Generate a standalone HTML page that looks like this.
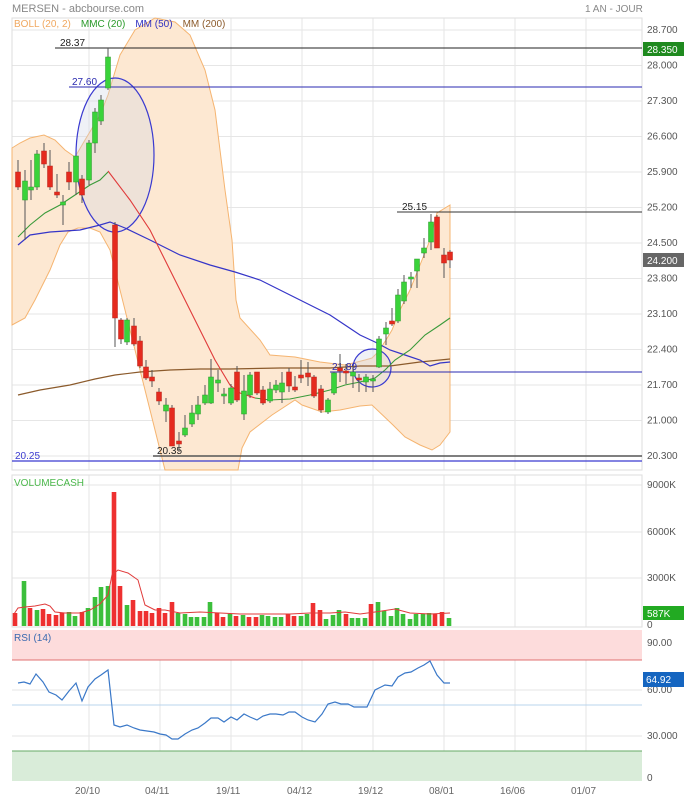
<!DOCTYPE html>
<html><head><meta charset="utf-8"><style>
html,body{margin:0;padding:0;background:#fff;width:684px;height:800px;overflow:hidden}
svg{display:block;font-family:"Liberation Sans",sans-serif}
</style></head><body>
<svg id="s" width="684" height="800" xmlns="http://www.w3.org/2000/svg">
<rect width="684" height="800" fill="#fff"/>
<text x="12" y="12" font-size="11" fill="#888">MERSEN - abcbourse.com</text>
<text x="585" y="12" font-size="10" fill="#888">1 AN - JOUR</text>
<g id="grid" stroke="#e6e6e6" stroke-width="1"></g>
<rect x="12" y="18" width="630" height="452" fill="none" stroke="#ddd"/>
<rect x="12" y="475" width="630" height="152" fill="none" stroke="#ddd"/>
<!-- RSI bands -->
<rect x="12" y="630" width="630" height="30" fill="#fddcdc"/>
<line x1="12" y1="660" x2="642" y2="660" stroke="#e07070"/>
<line x1="12" y1="705" x2="642" y2="705" stroke="#b8d4ee"/>
<rect x="12" y="751" width="630" height="30" fill="#d9ecd9"/>
<line x1="12" y1="751" x2="642" y2="751" stroke="#66aa66"/>
<!-- Bollinger -->
<path d="M12,148 L20,143 L30,138 L44,135 L55,140 L65,150 L75,157 L85,140 L100,115 L108,95 L120,55 L135,30 L155,18 L175,22 L190,35 L205,70 L215,110 L225,190 L232,240 L236,300 L240,318 L260,340 L270,355 L295,357 L320,362 L345,365 L365,360 L372,358 L378,352 L386,340 L392,330 L400,310 L410,290 L420,265 L430,240 L437,213 L450,205 L450,432 L440,445 L432,450 L420,445 L405,437 L393,425 L372,405 L360,406 L340,410 L322,412 L302,405 L295,400 L272,415 L250,432 L242,448 L238,470 L165,470 L160,450 L150,410 L140,370 L130,330 L120,290 L110,250 L100,232 L90,228 L78,228 L68,232 L60,245 L50,270 L35,300 L25,318 L12,325 Z" fill="#fde8d2" stroke="#f5b470" stroke-width="1"/>
<ellipse cx="115" cy="155" rx="39" ry="77" fill="rgba(210,215,230,0.35)" stroke="#3a3ad0" stroke-width="1.2"/>
<circle cx="372" cy="368" r="19" fill="rgba(210,215,230,0.35)" stroke="#3a3ad0" stroke-width="1.2"/>
<polyline fill="none" stroke="#8b5a2b" stroke-width="1.2" points="18,395 40,390 70,385 95,379 115,375 140,372 170,370 200,369 230,369 280,368 330,368 360,366 390,366 420,362 450,359"/>
<polyline fill="none" stroke="#3535c8" stroke-width="1.2" points="18,245 30,235 50,232 80,230 100,225 110,222 125,228 150,240 180,255 210,265 235,272 260,280 290,295 310,305 330,315 342,323 360,335 375,342 390,350 405,355 420,360 430,366 440,363 450,362"/>
<polyline fill="none" stroke="#3a9a3a" stroke-width="1.1" points="18,237 30,225 45,213 60,205 75,195 90,185 100,180 108,172"/>
<polyline fill="none" stroke="#e03a3a" stroke-width="1.1" points="108,171 130,200 150,230 170,270 185,300 200,330 215,360 230,385 240,393 255,398"/>
<polyline fill="none" stroke="#3a9a3a" stroke-width="1.1" points="255,398 270,400 290,399 310,395 330,390 345,385 360,382 375,378 385,370 395,360 410,350 425,335 440,325 450,318"/>
<!-- horizontal levels -->
<line x1="55" y1="48" x2="642" y2="48" stroke="#222"/>
<text x="60" y="46" font-size="10" fill="#222">28.37</text>
<line x1="69" y1="87" x2="642" y2="87" stroke="#2a2ab0"/>
<text x="72" y="85" font-size="10" fill="#2a2ab0">27.60</text>
<line x1="397" y1="212" x2="642" y2="212" stroke="#333"/>
<text x="402" y="210" font-size="10" fill="#222">25.15</text>
<line x1="330" y1="372" x2="642" y2="372" stroke="#2a2ab0"/>
<text x="332" y="370" font-size="10" fill="#2a2ab0">21.89</text>
<line x1="153" y1="456" x2="642" y2="456" stroke="#555" stroke-width="1.5"/>
<text x="157" y="454" font-size="10" fill="#222">20.35</text>
<line x1="12" y1="461" x2="642" y2="461" stroke="#3a3ad0" stroke-width="1.2"/>
<text x="15" y="459" font-size="10" fill="#3a3ad0">20.25</text>
<g id="candles"></g>
<g id="vols"></g>
<polyline fill="none" stroke="#e03a3a" stroke-width="1" points="14,614 18,608 25,607 35,606 45,604 50,606 55,612 65,613 80,613 90,610 100,604 108,595 112,575 118,570 128,573 138,580 145,605 155,610 165,610 180,613 200,612 220,613 240,614 260,614 290,614 310,613 330,613 345,612 360,614 375,612 395,609 410,613 430,614 450,613"/>
<polyline fill="none" stroke="#3a78c8" stroke-width="1.2" points="18,683 24,682 30,684 36,674 43,682 49,692 56,695 62,700 69,691 76,683 82,701 88,687 95,679 101,675 108,670 114,725 120,727 127,725 134,728 140,730 147,731 154,732 160,734 166,735 172,739 178,739 185,734 192,730 198,728 205,723 211,718 218,718 224,722 231,717 237,720 244,714 250,717 257,720 263,716 270,714 276,714 283,715 289,712 295,712 302,717 308,720 315,722 322,714 328,704 335,702 341,704 348,704 354,707 361,707 367,707 375,690 385,685 392,686 398,677 405,673 411,672 418,668 424,665 430,661 437,675 444,683 450,683"/>
<!-- legends -->
<text x="14" y="27" font-size="10"><tspan fill="#f0a860">BOLL (20, 2)</tspan><tspan dx="10" fill="#2a9a2a">MMC (20)</tspan><tspan dx="10" fill="#3030c0">MM (50)</tspan><tspan dx="10" fill="#8b5a2b">MM (200)</tspan></text>
<text x="14" y="486" font-size="10" fill="#4cb84c">VOLUMECASH</text>
<text x="14" y="641" font-size="10" fill="#3a6ab0">RSI (14)</text>
<!-- right labels -->
<g font-size="10" fill="#555" id="rl"></g>
<rect x="643" y="42" width="41" height="14" fill="#1f8a1f"/><text x="647" y="53" font-size="10" fill="#fff">28.350</text>
<rect x="643" y="253" width="41" height="14" fill="#666"/><text x="647" y="264" font-size="10" fill="#fff">24.200</text>
<rect x="643" y="606" width="41" height="14" fill="#22aa22"/><text x="647" y="617" font-size="10" fill="#fff">587K</text>
<rect x="643" y="672" width="41" height="15" fill="#1565c0"/><text x="646" y="683" font-size="10" fill="#fff">64.92</text>
<g font-size="10" fill="#666" id="bl"></g>
</svg>
<script>
var NS="http://www.w3.org/2000/svg";
function el(p,t,a,txt){var e=document.createElementNS(NS,t);for(var k in a)e.setAttribute(k,a[k]);if(txt)e.textContent=txt;p.appendChild(e);return e;}
var g=document.getElementById('grid');
[89,160,231,302,373,444,515,586].forEach(function(x){el(g,'line',{x1:x,y1:18,x2:x,y2:470});el(g,'line',{x1:x,y1:475,x2:x,y2:627});el(g,'line',{x1:x,y1:630,x2:x,y2:781});});
for(var i=0;i<13;i++){var y=30+i*35.5;el(g,'line',{x1:12,y1:y,x2:642,y2:y});}
[485,532,578].forEach(function(y){el(g,'line',{x1:12,y1:y,x2:642,y2:y});});
[643,690,736].forEach(function(y){el(g,'line',{x1:12,y1:y,x2:642,y2:y});});
var rl=document.getElementById('rl');
var pl=["28.700","28.000","27.300","26.600","25.900","25.200","24.500","23.800","23.100","22.400","21.700","21.000","20.300"];
pl.forEach(function(t,i){el(rl,'text',{x:647,y:33+i*35.5},t);});
[["9000K",488],["6000K",535],["3000K",581],["0",628],["90.00",646],["60.00",693],["30.000",739],["0",781]].forEach(function(a){el(rl,'text',{x:647,y:a[1]},a[0]);});
var bl=document.getElementById('bl');
[["20/10",75],["04/11",145],["19/11",216],["04/12",287],["19/12",358],["08/01",429],["16/06",500],["01/07",571]].forEach(function(a){el(bl,'text',{x:a[1],y:794},a[0]);});
// candles: x, top, bottom, color, hi, lo
var C=[[18,172,187,'r',160,190],[25,181,200,'g',170,240],[31,187,190,'g',160,200],[37,154,187,'g',150,190],[44,151,164,'r',143,168],[50,166,187,'r',150,190],[57,192,195,'r',174,198],[63,202,205,'g',195,225],[69,172,182,'r',162,190],[76,156,182,'g',156,195],[82,179,195,'r',175,203],[89,143,180,'g',140,185],[95,112,143,'g',108,153],[101,100,121,'g',95,125],[108,57,88,'g',48,90],[115,225,318,'r',222,347],[121,320,339,'r',318,344],[127,320,342,'g',318,345],[134,326,344,'r',318,346],[140,341,366,'r',336,368],[146,367,378,'r',360,380],[152,377,381,'r',370,387],[159,392,401,'r',388,405],[166,405,411,'g',398,422],[172,408,446,'r',405,446],[179,441,444,'r',432,452],[185,428,435,'g',415,437],[192,413,424,'g',405,427],[198,405,414,'g',396,420],[205,395,403,'g',385,405],[211,377,403,'g',359,404],[218,380,383,'g',370,392],[224,394,396,'g',388,404],[231,388,403,'g',384,405],[237,372,400,'r',366,402],[244,391,414,'g',375,420],[250,375,395,'g',372,398],[257,372,393,'r',372,395],[263,390,403,'r',386,405],[270,389,401,'g',382,403],[276,385,390,'g',380,393],[282,383,392,'g',372,403],[289,372,386,'r',368,392],[295,387,390,'r',376,392],[301,375,378,'r',360,383],[308,373,377,'r',362,386],[314,377,396,'r',375,398],[321,389,410,'r',385,413],[328,400,412,'g',398,414],[334,373,393,'g',372,395],[340,368,371,'r',354,382],[346,371,373,'r',364,384],[353,372,376,'g',366,388],[359,378,380,'r',374,392],[366,377,382,'g',374,392],[373,379,380,'g',375,392],[379,339,367,'g',336,368],[386,328,334,'g',322,345],[392,321,324,'r',308,326],[398,295,321,'g',289,323],[404,282,301,'g',275,304],[411,277,279,'g',272,288],[417,259,271,'g',260,288],[424,248,253,'g',238,258],[431,222,242,'g',214,250],[437,217,248,'r',215,248],[444,255,263,'r',248,278],[450,252,260,'r',250,268]];
var cg=document.getElementById('candles');
C.forEach(function(c){el(cg,'line',{x1:c[0],y1:c[4],x2:c[0],y2:c[5],stroke:'#555','stroke-width':1});
el(cg,'rect',{x:c[0]-2.5,y:c[1],width:5,height:Math.max(2,c[2]-c[1]),fill:c[3]=='r'?'#e52a1e':'#3ad33a',stroke:c[3]=='r'?'#b8221a':'#2a9a2a','stroke-width':0.5});});
// volumes: x, top y, color
var V=[[15,613,'r'],[24,581,'g'],[30,608,'r'],[37,610,'g'],[43,609,'r'],[49,614,'r'],[56,615,'r'],[62,613,'r'],[69,612,'g'],[75,616,'g'],[82,612,'r'],[88,608,'g'],[95,597,'g'],[101,587,'g'],[108,586,'g'],[114,492,'r'],[120,586,'r'],[127,605,'g'],[133,600,'r'],[140,611,'r'],[146,611,'r'],[152,613,'r'],[159,608,'r'],[165,613,'r'],[172,602,'r'],[178,613,'g'],[185,614,'g'],[191,617,'g'],[197,617,'g'],[204,617,'g'],[210,602,'g'],[217,613,'r'],[223,617,'r'],[230,614,'g'],[236,616,'r'],[243,615,'g'],[249,617,'r'],[256,617,'r'],[262,615,'g'],[268,616,'g'],[275,617,'g'],[281,617,'g'],[288,614,'r'],[294,616,'r'],[301,616,'g'],[307,614,'g'],[313,603,'r'],[320,610,'r'],[326,619,'g'],[333,615,'g'],[339,610,'g'],[346,614,'r'],[352,618,'g'],[358,618,'g'],[365,618,'g'],[371,604,'r'],[378,602,'g'],[384,611,'g'],[391,616,'g'],[397,608,'g'],[403,614,'g'],[410,619,'g'],[416,614,'g'],[423,614,'g'],[429,613,'g'],[435,614,'r'],[442,612,'r'],[449,618,'g']];
var vg=document.getElementById('vols');
V.forEach(function(v){el(vg,'rect',{x:v[0]-2.3,y:v[1],width:4.6,height:626-v[1],fill:v[2]=='r'?'#ee3030':'#3cbf3c'});});
</script>
</body></html>
